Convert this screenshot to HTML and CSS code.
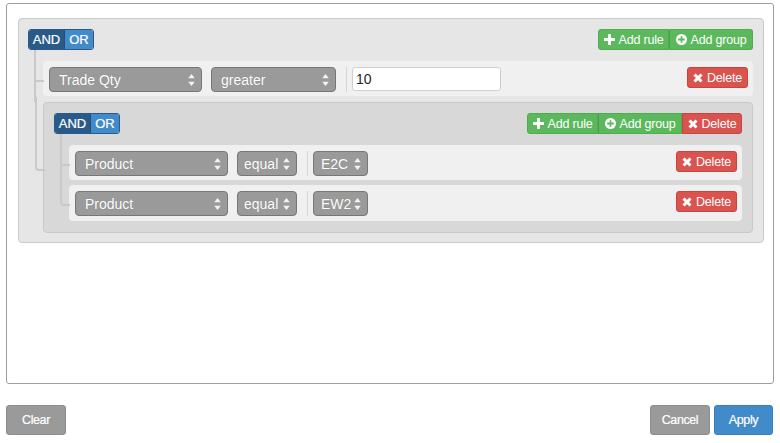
FILE: index.html
```html
<!DOCTYPE html>
<html>
<head>
<meta charset="utf-8">
<link rel="stylesheet" href="styles.css">
</head>
<body>
<div class="page">
  <div class="panel">
    <div class="group main">
      <div class="group-header">
        <div class="conds"><span class="cond on">AND</span><span class="cond">OR</span></div>
        <div class="actions">
          <button class="btn green w-rule"><svg class="ic" viewBox="0 0 10 10"><path d="M3.7 0h2.6v3.7H10v2.6H6.3V10H3.7V6.3H0V3.7h3.7z"/></svg>Add rule</button><button class="btn green w-group"><svg class="ic" viewBox="0 0 10 10"><circle cx="5" cy="5" r="5"/><path class="cut" d="M4.2 2h1.6v2.2H8v1.6H5.8V8H4.2V5.8H2V4.2h2.2z"/></svg>Add group</button>
        </div>
      </div>
      <div class="rules-list">
        <div class="item rule">
          <div class="sel w-field">Trade Qty<svg class="arr" viewBox="0 0 6 11"><path d="M3 0l3 4H0zM3 11L0 7h6z"/></svg></div>
          <div class="sel w-op">greater<svg class="arr" viewBox="0 0 6 11"><path d="M3 0l3 4H0zM3 11L0 7h6z"/></svg></div>
          <span class="sep"></span>
          <div class="inp">10</div>
          <button class="btn red del"><svg class="ic x" viewBox="0 0 10 10"><path d="M1.5 1.5l7 7M8.5 1.5l-7 7"/></svg>Delete</button>
        </div>
        <div class="item group nested">
          <div class="group-header">
            <div class="conds"><span class="cond on">AND</span><span class="cond">OR</span></div>
            <div class="actions">
              <button class="btn green w-rule"><svg class="ic" viewBox="0 0 10 10"><path d="M3.7 0h2.6v3.7H10v2.6H6.3V10H3.7V6.3H0V3.7h3.7z"/></svg>Add rule</button><button class="btn green w-group2"><svg class="ic" viewBox="0 0 10 10"><circle cx="5" cy="5" r="5"/><path class="cut" d="M4.2 2h1.6v2.2H8v1.6H5.8V8H4.2V5.8H2V4.2h2.2z"/></svg>Add group</button><button class="btn red w-del"><svg class="ic x" viewBox="0 0 10 10"><path d="M1.5 1.5l7 7M8.5 1.5l-7 7"/></svg>Delete</button>
            </div>
          </div>
          <div class="rules-list">
            <div class="item rule">
              <div class="sel w-field">Product<svg class="arr" viewBox="0 0 6 11"><path d="M3 0l3 4H0zM3 11L0 7h6z"/></svg></div>
              <div class="sel w-eq">equal<svg class="arr" viewBox="0 0 6 11"><path d="M3 0l3 4H0zM3 11L0 7h6z"/></svg></div>
              <span class="sep"></span>
              <div class="sel w-val">E2C<svg class="arr" viewBox="0 0 6 11"><path d="M3 0l3 4H0zM3 11L0 7h6z"/></svg></div>
              <button class="btn red del"><svg class="ic x" viewBox="0 0 10 10"><path d="M1.5 1.5l7 7M8.5 1.5l-7 7"/></svg>Delete</button>
            </div>
            <div class="item rule">
              <div class="sel w-field">Product<svg class="arr" viewBox="0 0 6 11"><path d="M3 0l3 4H0zM3 11L0 7h6z"/></svg></div>
              <div class="sel w-eq">equal<svg class="arr" viewBox="0 0 6 11"><path d="M3 0l3 4H0zM3 11L0 7h6z"/></svg></div>
              <span class="sep"></span>
              <div class="sel w-val">EW2<svg class="arr" viewBox="0 0 6 11"><path d="M3 0l3 4H0zM3 11L0 7h6z"/></svg></div>
              <button class="btn red del"><svg class="ic x" viewBox="0 0 10 10"><path d="M1.5 1.5l7 7M8.5 1.5l-7 7"/></svg>Delete</button>
            </div>
          </div>
        </div>
      </div>
    </div>
  </div>
  <div class="footer">
    <button class="fbtn gray">Clear</button>
    <div class="fright">
      <button class="fbtn gray">Cancel</button>
      <button class="fbtn blue">Apply</button>
    </div>
  </div>
</div>
</body>
</html>
```
FILE: styles.css
```css
* { box-sizing: border-box; }
html, body { margin: 0; padding: 0; background: #fff; }
body { font-family: "Liberation Sans", Arial, Helvetica, sans-serif; color: #333; }
.page { padding: 3px 6px 0 6px; }
.panel {
  height: 381px;
  border: 1px solid #9e9e9e;
  border-radius: 3px;
  padding: 14px 9px 0 11px;
}
.group {
  border: 1px solid #c9c9c9;
  border-radius: 4px;
}
.group.main {
  background: #e6e6e6;
  padding: 10px 10px 9px 9px;
}
.group.nested {
  background: #d8d8d8;
  padding: 10px 10px 11px 10px;
}
.group-header {
  display: flex;
  justify-content: space-between;
  align-items: center;
  height: 21px;
}
.conds { display: flex; height: 21px; border-radius: 3px; overflow: hidden; border: 1px solid #2b5a87; }
.cond {
  display: flex; align-items: center; justify-content: center;
  height: 19px; padding: 0 4px;
  font-size: 13px; color: #fff; background: #428bca;
  -webkit-text-stroke: 0.2px #fff;
}
.cond.on { background: #2a5a88; border-right: 1px solid #244e77; width: 36px; }
.cond:not(.on) { width: 28px; }
.actions { display: flex; }
.btn {
  display: inline-flex; align-items: center; justify-content: center;
  height: 21px; padding: 0; margin: 0;
  font-family: inherit; font-size: 12.5px; color: #fff;
  border: 1px solid; border-radius: 0;
  cursor: pointer;
  letter-spacing: -0.2px;
}
.actions .btn:first-child { border-radius: 3px 0 0 3px; }
.actions .btn:last-child { border-radius: 0 3px 3px 0; }
.actions .btn + .btn { border-left: 1px solid #4a9e4a; }
.btn.green { background: #5cb85c; border-color: #4cae4c; }
.btn.red { background: #d9534f; border-color: #c9433f; }
.actions .btn.red { border-left-color: #c9433f; }
.w-rule { width: 71px; }
.w-group { width: 84px; }
.w-group2 { width: 84px; }
.w-del { width: 60px; }
.ic { width: 11px; height: 11px; margin-right: 4px; fill: #fff; }
.ic .cut { fill: #5cb85c; }
.ic.x { fill: none; stroke: #fff; stroke-width: 3; width: 10px; height: 10px; }
.rules-list {
  display: flex; flex-direction: column;
  margin-top: 11px; padding-left: 15px;
  --gap: 6px;
  gap: var(--gap);
}
.nested .rules-list { --gap: 5px; }
.rules-list > .item { position: relative; }
.rules-list > .item::before {
  content: ''; position: absolute;
  left: -9px; width: 8px;
  top: calc(var(--gap) * -1);
  height: calc(50% + var(--gap) + 1px);
  border-left: 2px solid #c9c9c9;
  border-bottom: 2px solid #c9c9c9;
}
.rules-list > .item:first-child::before { top: -11px; height: calc(50% + 12px); }
.rules-list > .item::after {
  content: ''; position: absolute;
  left: -9px; top: 50%; bottom: calc(var(--gap) * -1);
  border-left: 2px solid #c9c9c9;
}
.rules-list > .item:last-child::after { display: none; }
.rules-list > .item:last-child::before { border-radius: 0 0 0 4px; }
.rule {
  display: flex; align-items: flex-start;
  background: #f1f0f1;
  border-radius: 4px;
  padding: 6px 5px 5px 6px;
  height: 36px;
}
.rules-list > .rule:first-child { height: 35px; padding-bottom: 4px; }
.sel {
  position: relative;
  display: flex; align-items: center;
  height: 25px;
  background: #9a9a9a;
  border: 1px solid #777;
  border-radius: 4px;
  color: #fff;
  font-size: 14px;
  padding-left: 9px;
  margin-right: 9px;
  text-shadow: 0 0 1px rgba(0,0,0,0.2);
}
.arr { position: absolute; right: 6px; top: 6px; width: 7px; height: 12px; fill: #f2f2f2; }
.w-field { width: 153px; }
.w-op { width: 125px; }
.w-eq { width: 60px; padding-left: 6px; }
.w-val { width: 55px; padding-left: 7px; }
.sep { width: 1px; height: 25px; background: #d6d6d6; margin: 0 5px 0 1px; }
.inp {
  display: flex; align-items: center;
  width: 149px; height: 24px;
  background: #fff; border: 1px solid #cfcfcf; border-radius: 3px;
  padding-left: 3px; font-size: 14px; color: #222;
}
.del { margin-left: auto; width: 61px; border-radius: 3px; }
.footer {
  display: flex; justify-content: space-between;
  margin-top: 21px; padding-right: 1px;
}
.fright { display: flex; gap: 4px; }
.fbtn {
  height: 30px; width: 60px;
  border-radius: 3px; border: 1px solid;
  font-family: inherit; font-size: 12.5px; color: #fff;
  padding: 0; margin: 0;
  letter-spacing: -0.4px;
  -webkit-text-stroke: 0.2px #fff;
}
.fbtn.gray { background: #9a9a9a; border-color: #8c8c8c; }
.fbtn.blue { background: #428bca; border-color: #3a7fbb; width: 59px; }
```
